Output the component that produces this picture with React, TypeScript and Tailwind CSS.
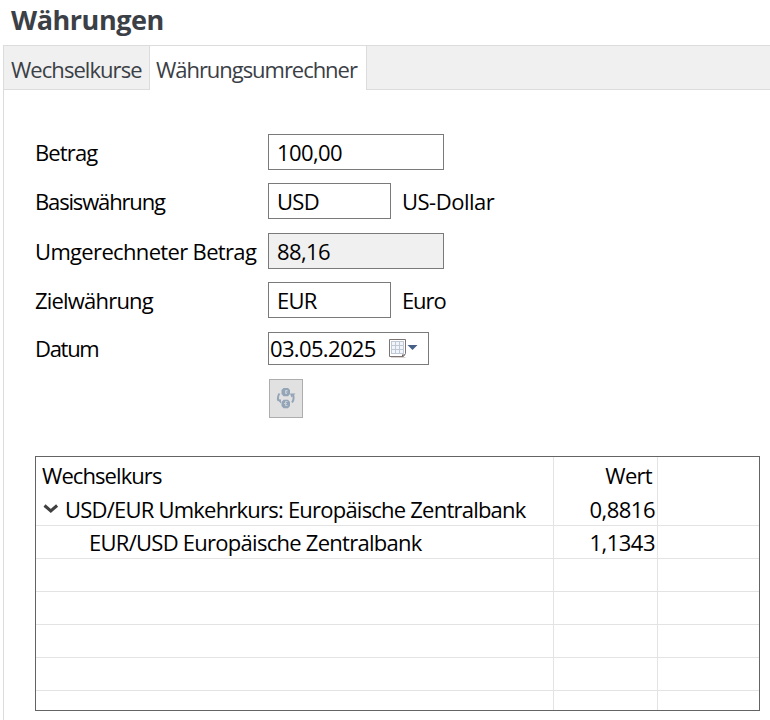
import React from 'react';

function CalendarIcon() {
  return (
    <svg width="30" height="21" viewBox="0 0 30 21" className="block">
      <path d="M3 19.500h14.500" fill="none" stroke="#d9d4d1" />
      <path d="M1.500 1.500h16v14l-2 3h-14z" fill="#fff" stroke="#7d7372" />
      <path d="M3 3h13v13H3z" fill="#bfc9d6" />
      <path
        d="M4 4h3v3H4zM8 4h3v3H8zM12 4h3v3h-3zM4 8h3v3H4zM8 8h3v3H8zM12 8h3v3h-3zM4 12h3v3H4zM8 12h3v3H8zM12 12h3v3h-3z"
        fill="#f1f5fa"
      />
      <path d="M14 18.500v-2h3.500z" fill="#6e6465" />
      <path d="M19.500 7h10L24.500 12z" fill="#465f87" />
    </svg>
  );
}

function ExchangeIcon() {
  return (
    <svg width="20" height="21" viewBox="0 0 20 21" className="block">
      <path d="M7.500 0h4.500l2 2v4L12 8.300H7.500L5.500 6V2zM7.500 11.700h4.500l2 2.300v4l-2 2.300H7.500L5.500 18v-4z" fill="#94a5b8" />
      <path d="M11.500 2.500H9.500v3h1.500M9.500 4h2M11.500 13.500h-2v4h2M8 15.500h3" fill="none" stroke="#c9d0d8" />
      <path d="M3.500 5.500C1.500 8 1.500 10 2.500 13M16 14.500c2-2.500 2-5 1-8" fill="none" stroke="#94a5b8" strokeWidth="2" />
      <path d="M0.500 11l4.500 0.500v4zM14 5.500h5.500l-4 4z" fill="#94a5b8" />
    </svg>
  );
}

function Label({ children, className }: { children: React.ReactNode; className: string }) {
  return <div className={`w-[233px] ${className}`}>{children}</div>;
}

function GridRow({ name, value }: { name?: React.ReactNode; value?: React.ReactNode }) {
  return (
    <div className="flex h-[33px] shrink-0 border-b border-[#e3e3e3]">
      <div className="flex w-[518px] items-center border-r border-[#e3e3e3]">{name}</div>
      <div className="flex w-[104px] items-center justify-end border-r border-[#e3e3e3] pr-[2px]">{value}</div>
    </div>
  );
}

export default function App() {
  return (
    <div className="h-[720px] w-[770px] overflow-hidden bg-white font-['Open_Sans','Noto_Sans',sans-serif] text-[22px] leading-[32px] whitespace-nowrap text-black">
      <h1 className="h-[45px] pt-[4px] pl-[11px] text-[27px] leading-[32px] font-bold tracking-[-0.45px] text-[#3b4046]">Währungen</h1>
      <div className="ml-[3px] h-[675px] border-t border-l border-[#dcdcdc]">
        <div className="flex h-[44px] text-[#3b4046]">
          <div className="w-[146px] border-r border-b border-[#dcdcdc] bg-[#f0f0f0] pt-[7px] pl-[7px] tracking-[-0.95px]">Wechselkurse</div>
          <div className="w-[217px] border-r border-[#dcdcdc] pt-[7px] pl-[6px] tracking-[-1.04px]">Währungsumrechner</div>
          <div className="flex-1 border-b border-[#dcdcdc] bg-[#f0f0f0]" />
        </div>
        <div className="pt-[44px] pl-[31px]">
          <div className="mb-[13px] flex h-[36px] items-center">
            <Label className="tracking-[-0.85px]">Betrag</Label>
            <div className="flex h-[36px] w-[176px] items-center border border-[#7a7a7a] pl-[8px] tracking-[-0.6px]">100,00</div>
          </div>
          <div className="mb-[14px] flex h-[36px] items-center">
            <Label className="tracking-[-1.15px]">Basiswährung</Label>
            <div className="flex h-[36px] w-[123px] items-center border border-[#7a7a7a] pl-[8px] tracking-[-0.7px]">USD</div>
            <div className="pl-[11px] tracking-[-0.5px]">US-Dollar</div>
          </div>
          <div className="mb-[13px] flex h-[36px] items-center">
            <Label className="tracking-[-0.66px]">Umgerechneter Betrag</Label>
            <div className="flex h-[36px] w-[176px] items-center border border-[#7a7a7a] bg-[#f0f0f0] pl-[8px] tracking-[-0.6px]">88,16</div>
          </div>
          <div className="mb-[14px] flex h-[36px] items-center">
            <Label className="tracking-[-0.8px]">Zielwährung</Label>
            <div className="flex h-[36px] w-[123px] items-center border border-[#7a7a7a] pl-[8px] tracking-[-0.8px]">EUR</div>
            <div className="pl-[11px] tracking-[-1.1px]">Euro</div>
          </div>
          <div className="flex h-[33px] items-center">
            <Label className="pb-[2px] tracking-[-1.3px]">Datum</Label>
            <div className="flex h-[33px] w-[161px] items-center border border-[#7a7a7a] pl-[1px]">
              <span className="w-[118px] pb-[2px] tracking-[-0.65px]">03.05.2025</span>
              <CalendarIcon />
            </div>
          </div>
          <div className="mt-[14px] ml-[234px] flex h-[39px] w-[34px] items-center justify-center border border-[#adadad] bg-[#e1e1e1]">
            <ExchangeIcon />
          </div>
          <div className="mt-[38px] flex h-[255px] w-[725px] flex-col overflow-hidden border border-[#646464]">
            <div className="flex h-[35px] shrink-0">
              <div className="w-[518px] border-r border-[#e3e3e3] pt-[2px] pl-[6px] tracking-[-0.92px]">Wechselkurs</div>
              <div className="w-[104px] border-r border-[#e3e3e3] pt-[2px] pr-[5px] text-right tracking-[-0.7px]">Wert</div>
            </div>
            <div className="flex h-[34px] shrink-0 border-b border-[#e3e3e3]">
              <div className="flex w-[518px] items-center border-r border-[#e3e3e3]">
                <svg width="16" height="12" viewBox="0 0 16 12" className="ml-[7px]">
                  <path d="M1.500 2.500l6.300 5.500 6.300-5.500" fill="none" stroke="#404040" strokeWidth="3" />
                </svg>
                <span className="pl-[6px] tracking-[-0.78px]">USD/EUR Umkehrkurs: Europäische Zentralbank</span>
              </div>
              <div className="flex w-[104px] items-center justify-end border-r border-[#e3e3e3] pr-[2px] tracking-[-0.5px]">0,8816</div>
            </div>
            <GridRow
              name={<span className="pl-[53px] tracking-[-0.73px]">EUR/USD Europäische Zentralbank</span>}
              value={<span className="tracking-[-0.5px]">1,1343</span>}
            />
            <GridRow />
            <GridRow />
            <GridRow />
            <GridRow />
            <GridRow />
          </div>
        </div>
      </div>
    </div>
  );
}
